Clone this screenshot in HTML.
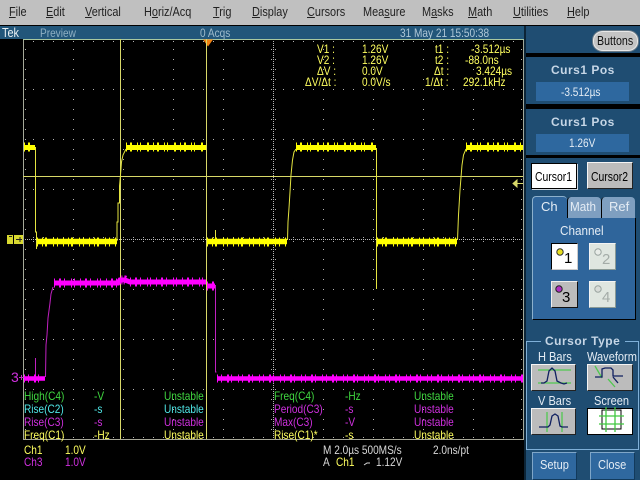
<!DOCTYPE html>
<html><head><meta charset="utf-8">
<style>
html,body{margin:0;padding:0;background:#000}
#p{position:relative;width:640px;height:480px;overflow:hidden;background:#000;font-family:"Liberation Sans",sans-serif}
.b{position:absolute;box-sizing:border-box}
.t{position:absolute;white-space:pre;transform:scaleX(.84);transform-origin:0 0;font-size:12px;line-height:14px}
.m{font-size:13px;line-height:16px;color:#222;top:4px;transform:scaleX(.84)}
.y{color:#ffff60}.g{color:#40d840}.c{color:#50e8e8}.v{color:#d030e0}
.h{color:#c6d6e6;font-weight:bold;font-size:12px;letter-spacing:.5px;transform:none}
.w{color:#e4ecf4}
.btn{position:absolute;box-sizing:border-box;background:#bcbcbc;border:1px solid;border-color:#f4f4f4 #222 #222 #f4f4f4}
.ch{position:absolute;box-sizing:border-box;width:27px;height:27px;background:#dfe6e0;border:1px solid;border-color:#f4f4f4 #8a9a96 #8a9a96 #f4f4f4}
.bb{position:absolute;box-sizing:border-box;background:#2f689f;border:1px solid;border-color:#7fa6c8 #123a5c #123a5c #7fa6c8}
</style></head><body>
<div id="p">
<svg class="b" style="left:0;top:0" width="640" height="480" viewBox="0 0 640 480">
<g fill="none" stroke="#b4b4b4" stroke-dasharray="1 9">
<path d="M23 89.5H523M23 139.5H523M23 189.5H523M23 289.5H523M23 339.5H523M23 389.5H523M23 41.5H523M23 437.5H523"/>
<path d="M73.5 39V439M123.5 39V439M173.5 39V439M223.5 39V439M323.5 39V439M373.5 39V439M423.5 39V439M473.5 39V439M25.5 39V439M521.5 39V439"/>
</g>
<path d="M273.5 39V439M23 239.5H523" stroke="#b4b4b4" stroke-dasharray="1 1" fill="none"/>
<path d="M271.5 39V439M275.5 39V439" stroke="#b0b0b0" stroke-dasharray="1 9" fill="none"/>
<path d="M23 237.5H523M23 241.5H523" stroke="#b0b0b0" stroke-dasharray="1 9" fill="none"/>
<path d="M23.5 39V439M523.5 39V439" stroke="#a4a898" fill="none"/>
<path d="M23 39.5H524" stroke="#a8c8a0" fill="none"/>
<path d="M23 439.5H524" stroke="#a8a898" fill="none"/>
<path d="M120.5 39V439M206.5 39V439M23 176.5H523" stroke="#d8d868" fill="none"/>

<!-- yellow edges -->
<path d="M35.5 147V232L36.5 232V249M117 241V222L118 222V203L119.5 203V186L120.5 175L121.5 162L123 155L126 149M287.5 240L288 222L289 208L290 192L291 175L292.5 160L294 152L296 149M376.5 148V289M457.5 240L458.5 215L460 190L462 165L463.5 155L466 149M215.5 230V240" stroke="#e4e440" fill="none"/>
<!-- yellow levels -->
<g fill="none" stroke="#ffff00">
<path d="M24 147.5H35M126 147.5H206M296 147.5H376M466 147.5H523" stroke-width="5"/>
<path d="M37 241.5H117M207 241.5H287M377 241.5H457" stroke-width="5.5"/>
<path d="M24 147H35M126 147H206M296 147H376M466 147H523" stroke-width="9" stroke-dasharray="1 3 2 5 1 2 1 6 2 4"/>
<path d="M37 242H117M207 242H287M377 242H457" stroke-width="9" stroke-dasharray="1 4 1 2 2 6 1 3 1 5"/>
</g>
<!-- magenta -->
<path d="M45.5 377L46 345L47 335L48 318L50 303L51 294L53 287M35.5 358V377M215.5 285V372L216.5 372" stroke="#c020c0" fill="none"/>
<g fill="none" stroke="#ff00ff">
<path d="M54 283H118L120 280H125L130 282H206M207 286H215" stroke-width="5"/>
<path d="M24 378.5H45M217 378.5H523" stroke-width="4.5"/>
<path d="M54 283H118L120 280H125L130 282H206M207 286H215" stroke-width="9" stroke-dasharray="1 4 2 3 1 6 1 2 1 5"/>
<path d="M24 378.5H45M217 378.5H523" stroke-width="8" stroke-dasharray="1 3 1 5 2 2 1 6"/>
</g>
<path d="M203 39.5h10l-5 7z" fill="#f08010"/>
<path d="M206.5 39V47" stroke="#d8d868"/>
<!-- markers -->
<rect x="7" y="235" width="6" height="9" fill="#d8d830"/>
<rect x="14" y="235" width="9" height="9" fill="#d8d830"/>
<path d="M9 236.5h3M16 239.5h6M20 237v5" stroke="#222" fill="none"/>
<path d="M19 377.5h5M21.5 375v5" stroke="#c030c0" fill="none"/>
<path d="M513 183.5l4-3.5v7zM516 183.5h7" fill="#d8d868" stroke="#d8d868"/>
<path d="M364 465l3-2h3" stroke="#d8d8d8" fill="none"/>
</svg>

<!-- top bars -->
<div class="b" style="left:0;top:0;width:640px;height:26px;background:#c0c0c0;border-bottom:1px solid #000"></div>
<div class="b" style="left:0;top:26px;width:524px;height:13px;background:#22567a"></div>
<div class="t m" style="left:9px"><u>F</u>ile</div>
<div class="t m" style="left:46px"><u>E</u>dit</div>
<div class="t m" style="left:85px"><u>V</u>ertical</div>
<div class="t m" style="left:144px">H<u>o</u>riz/Acq</div>
<div class="t m" style="left:213px"><u>T</u>rig</div>
<div class="t m" style="left:252px"><u>D</u>isplay</div>
<div class="t m" style="left:307px"><u>C</u>ursors</div>
<div class="t m" style="left:363px">Mea<u>s</u>ure</div>
<div class="t m" style="left:422px">M<u>a</u>sks</div>
<div class="t m" style="left:468px"><u>M</u>ath</div>
<div class="t m" style="left:513px"><u>U</u>tilities</div>
<div class="t m" style="left:567px"><u>H</u>elp</div>
<div class="t" style="left:2px;top:26px;color:#e8f0f4;font-size:13px">Tek</div>
<div class="t" style="left:40px;top:26px;color:#8fb0c4">Preview</div>
<div class="t" style="left:200px;top:26px;color:#9fbccc">0 Acqs</div>
<div class="t" style="left:400px;top:26px;color:#b0c8d8">31 May 21 15:50:38</div>

<!-- cursor readouts -->
<div class="t y" style="left:317px;top:42px">V1 :</div><div class="t y" style="left:362px;top:42px">1.26V</div><div class="t y" style="left:435px;top:42px">t1 :</div><div class="t y" style="left:471px;top:42px">-3.512µs</div>
<div class="t y" style="left:317px;top:53px">V2 :</div><div class="t y" style="left:362px;top:53px">1.26V</div><div class="t y" style="left:435px;top:53px">t2 :</div><div class="t y" style="left:465px;top:53px">-88.0ns</div>
<div class="t y" style="left:317px;top:64px">ΔV :</div><div class="t y" style="left:362px;top:64px">0.0V</div><div class="t y" style="left:434px;top:64px">Δt :</div><div class="t y" style="left:476px;top:64px">3.424µs</div>
<div class="t y" style="left:305px;top:75px">ΔV/Δt :</div><div class="t y" style="left:362px;top:75px">0.0V/s</div><div class="t y" style="left:425px;top:75px">1/Δt :</div><div class="t y" style="left:463px;top:75px">292.1kHz</div>

<div class="t v" style="left:11px;top:370px;font-size:14px;transform:none">3</div>

<!-- measurements -->
<div class="t g" style="left:24px;top:389px">High(C4)</div><div class="t g" style="left:94px;top:389px">-V</div><div class="t g" style="left:164px;top:389px">Unstable</div>
<div class="t c" style="left:24px;top:402px">Rise(C2)</div><div class="t c" style="left:94px;top:402px">-s</div><div class="t c" style="left:164px;top:402px">Unstable</div>
<div class="t v" style="left:24px;top:415px">Rise(C3)</div><div class="t v" style="left:94px;top:415px">-s</div><div class="t v" style="left:164px;top:415px">Unstable</div>
<div class="t y" style="left:24px;top:428px">Freq(C1)</div><div class="t y" style="left:94px;top:428px">-Hz</div><div class="t y" style="left:164px;top:428px">Unstable</div>
<div class="t g" style="left:274px;top:389px">Freq(C4)</div><div class="t g" style="left:345px;top:389px">-Hz</div><div class="t g" style="left:414px;top:389px">Unstable</div>
<div class="t v" style="left:274px;top:402px">Period(C3)</div><div class="t v" style="left:345px;top:402px">-s</div><div class="t v" style="left:414px;top:402px">Unstable</div>
<div class="t v" style="left:274px;top:415px">Max(C3)</div><div class="t v" style="left:345px;top:415px">-V</div><div class="t v" style="left:414px;top:415px">Unstable</div>
<div class="t y" style="left:274px;top:428px">Rise(C1)*</div><div class="t y" style="left:345px;top:428px">-s</div><div class="t y" style="left:414px;top:428px">Unstable</div>

<div class="t y" style="left:24px;top:443px">Ch1</div><div class="t y" style="left:65px;top:443px">1.0V</div>
<div class="t v" style="left:24px;top:455px">Ch3</div><div class="t v" style="left:65px;top:455px">1.0V</div>
<div class="t" style="left:323px;top:443px;color:#d8d8d8">M 2.0µs 500MS/s</div>
<div class="t" style="left:433px;top:443px;color:#d8d8d8">2.0ns/pt</div>
<div class="t" style="left:323px;top:455px;color:#d8d8d8">A</div>
<div class="t y" style="left:336px;top:455px">Ch1</div>
<div class="t" style="left:376px;top:455px;color:#d8d8d8">1.12V</div>

<!-- right panel -->
<div class="b" style="left:524px;top:26px;width:116px;height:454px;background:#1f4d72"></div>
<div class="b" style="left:524px;top:53px;width:116px;height:4px;background:#000"></div>
<div class="b" style="left:524px;top:104px;width:116px;height:5px;background:#000"></div>
<div class="b" style="left:524px;top:155px;width:116px;height:3px;background:#000"></div>
<div class="b" style="left:524px;top:26px;width:2px;height:454px;background:#0c2436"></div>
<div class="b" style="left:593px;top:31px;width:45px;height:20px;border-radius:10px/9px;background:#c4c4c4;border:1px solid #e8e8e8;box-shadow:0 0 0 1px #6a7a86"></div>
<div class="t" style="left:597px;top:34px;color:#111;font-size:13px;transform:scaleX(.82)">Buttons</div>

<div class="t h" style="left:551px;top:63px">Curs1 Pos</div>
<div class="b" style="left:536px;top:82px;width:93px;height:19px;background:#2e689f"></div>
<div class="t w" style="left:561px;top:85px">-3.512µs</div>
<div class="t h" style="left:551px;top:115px">Curs1 Pos</div>
<div class="b" style="left:536px;top:134px;width:93px;height:18px;background:#2e689f"></div>
<div class="t w" style="left:569px;top:136px">1.26V</div>

<div class="b" style="left:531px;top:163px;width:46px;height:26px;background:#fff;border:1px solid #000;box-shadow:1px 1px 0 #cfd8e0"></div>
<div class="t" style="left:535px;top:170px;color:#000;font-size:13px;transform:scaleX(.8)">Cursor1</div>
<div class="btn" style="left:587px;top:162px;width:46px;height:27px"></div>
<div class="t" style="left:591px;top:170px;color:#000;font-size:13px;transform:scaleX(.8)">Cursor2</div>

<!-- tabs -->
<div class="b" style="left:532px;top:196px;width:35px;height:24px;background:#2f659b;border-top:1px solid #8cb0cc;border-left:1px solid #8cb0cc;border-radius:4px 4px 0 0"></div>
<div class="b" style="left:567px;top:197px;width:34px;height:22px;background:#7f9fc0;border-left:1px solid #000;border-radius:4px 4px 0 0"></div>
<div class="b" style="left:601px;top:197px;width:34px;height:22px;background:#7f9fc0;border-left:1px solid #000;border-radius:4px 4px 0 0"></div>
<div class="b" style="left:532px;top:218px;width:104px;height:102px;background:#2f659b;border-left:1px solid #8cb0cc;border-right:1px solid #000;border-bottom:1px solid #000"></div>
<div class="t w" style="left:541px;top:200px;font-size:13px;transform:none">Ch</div>
<div class="t w" style="left:570px;top:200px;font-size:13px;transform:scaleX(.9)">Math</div>
<div class="t w" style="left:609px;top:200px;font-size:13px;transform:none">Ref</div>
<div class="t w" style="left:560px;top:224px;font-size:13px;transform:scaleX(.9)">Channel</div>

<div class="ch" style="left:551px;top:243px;background:#fff;border-color:#000 #ccc #ccc #000"></div>
<div class="ch" style="left:589px;top:243px"></div>
<div class="ch" style="left:551px;top:281px;background:#bcbcbc;border-color:#f0f0f0 #111 #111 #f0f0f0"></div>
<div class="ch" style="left:589px;top:281px"></div>
<svg class="b" style="left:524px;top:225px" width="116" height="115">
<circle cx="36" cy="27" r="3.2" fill="#e8e020" stroke="#333"/>
<circle cx="74" cy="27" r="3.2" fill="#e8ece8" stroke="#9aa4a0"/>
<circle cx="35" cy="64" r="3.2" fill="#b030c0" stroke="#222"/>
<circle cx="74" cy="64" r="3.2" fill="#d8dcd8" stroke="#9aa4a0"/>
</svg>
<div class="t" style="left:564px;top:252px;color:#000;font-size:15px;transform:none">1</div>
<div class="t" style="left:602px;top:253px;color:#a4aca8;font-size:15px;transform:none">2</div>
<div class="t" style="left:562px;top:291px;color:#000;font-size:15px;transform:none">3</div>
<div class="t" style="left:602px;top:291px;color:#a4aca8;font-size:15px;transform:none">4</div>

<!-- cursor type -->
<div class="b" style="left:526px;top:341px;width:113px;height:109px;border:1px solid #7fb0d8"></div>
<div class="b" style="left:541px;top:336px;width:84px;height:12px;background:#1f4d72"></div>
<div class="t h" style="left:545px;top:334px">Cursor Type</div>
<div class="t w" style="left:538px;top:350px;font-size:13px;transform:scaleX(.85)">H Bars</div>
<div class="t w" style="left:587px;top:350px;font-size:13px;transform:scaleX(.85)">Waveform</div>
<div class="t w" style="left:538px;top:394px;font-size:13px;transform:scaleX(.85)">V Bars</div>
<div class="t w" style="left:594px;top:394px;font-size:13px;transform:scaleX(.85)">Screen</div>
<div class="btn" style="left:531px;top:364px;width:45px;height:27px"></div>
<div class="btn" style="left:587px;top:364px;width:46px;height:27px"></div>
<div class="btn" style="left:531px;top:408px;width:45px;height:27px"></div>
<div class="b" style="left:587px;top:408px;width:46px;height:27px;background:#fff;border:1px solid #000"></div>
<svg class="b" style="left:524px;top:335px" width="116" height="145" viewBox="0 0 116 145">
<g fill="none" stroke-width="1.3">
<path d="M14 35H47M14 48H47" stroke="#50c850"/>
<path d="M17 48H20L23 46L25 36L28 33L31 36L33 46L37 48L40 49L43 48" stroke="#102060"/>
<path d="M71 31L78 43M84 44L91 52" stroke="#50c850"/>
<path d="M71 42H78V34L81 33H87L89 35V41H99M89 42L94 48" stroke="#102060"/>
<path d="M23 77V97M38 77V97" stroke="#50c850"/>
<path d="M15 92H24L26 90L28 81L31 79L34 81L36 91L38 92H44" stroke="#102060"/>
</g>
<path d="M78 75H97V94H78Z" fill="none" stroke="#000"/>
<path d="M75 81H100M75 89H100M82 72V97M91 72V97" fill="none" stroke="#40c840" stroke-width="1.3"/>
</svg>
<div class="bb" style="left:532px;top:452px;width:45px;height:28px"></div>
<div class="bb" style="left:590px;top:452px;width:45px;height:28px"></div>
<div class="t w" style="left:540px;top:458px;font-size:13px;transform:scaleX(.85)">Setup</div>
<div class="t w" style="left:598px;top:458px;font-size:13px;transform:scaleX(.85)">Close</div>
</div>
</body></html>
